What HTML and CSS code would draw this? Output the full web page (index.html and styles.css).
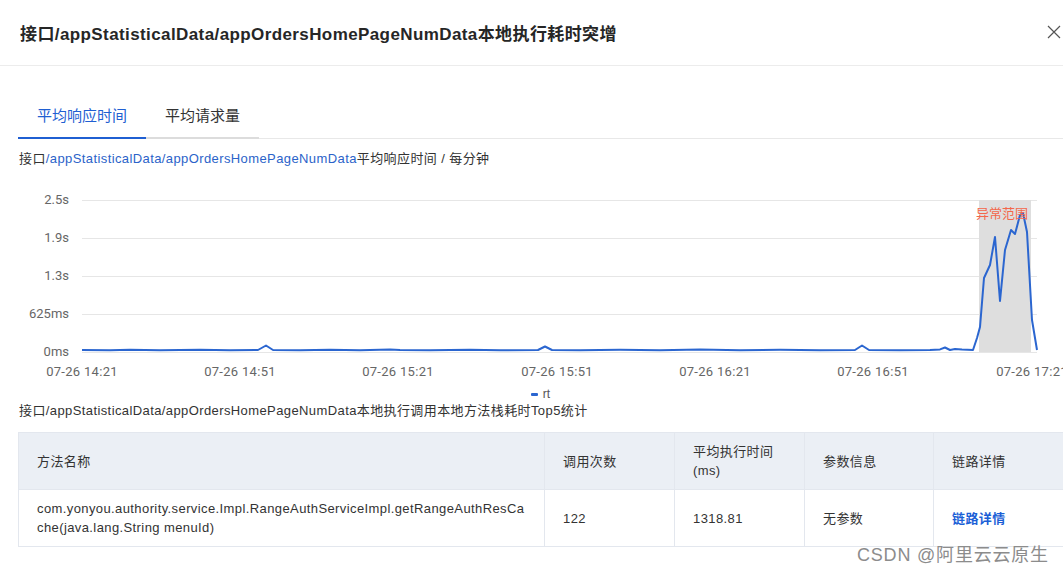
FILE: index.html
```html
<!DOCTYPE html>
<html lang="zh-CN">
<head>
<meta charset="utf-8">
<title>接口耗时突增</title>
<link rel="stylesheet" href="styles.css">
</head>
<body>
<div class="dialog">
  <header class="dlg-header">
    <h1 class="dlg-title">接口/appStatisticalData/appOrdersHomePageNumData本地执行耗时突增</h1>
    <svg class="close" width="14" height="14" viewBox="0 0 14 14"><path d="M1 1 L13 13 M13 1 L1 13" stroke="#555" stroke-width="1.2" fill="none"/></svg>
  </header>

  <nav class="tabs">
    <div class="tab active">平均响应时间</div>
    <div class="tab">平均请求量</div>
  </nav>

  <p class="subtitle">接口<span class="path">/appStatisticalData/appOrdersHomePageNumData</span>平均响应时间 / 每分钟</p>

  <svg class="chart" width="1063" height="192" viewBox="0 0 1063 192">
    <g class="grid" stroke="#e6e6e6" stroke-width="1">
      <line x1="82" y1="12.5" x2="1037" y2="12.5"/>
      <line x1="82" y1="50.5" x2="1037" y2="50.5"/>
      <line x1="82" y1="88.5" x2="1037" y2="88.5"/>
      <line x1="82" y1="126.5" x2="1037" y2="126.5"/>
      <line x1="82" y1="164.5" x2="1037" y2="164.5"/>
    </g>
    <rect x="979" y="12" width="52" height="152" fill="#dedede"/>
    <g class="ylab" text-anchor="end">
      <text x="69" y="16">2.5s</text>
      <text x="69" y="54">1.9s</text>
      <text x="69" y="92">1.3s</text>
      <text x="69" y="130">625ms</text>
      <text x="69" y="168">0ms</text>
    </g>
    <g class="xlab" text-anchor="middle">
      <text x="82" y="188">07-26 14:21</text>
      <text x="240" y="188">07-26 14:51</text>
      <text x="398" y="188">07-26 15:21</text>
      <text x="557" y="188">07-26 15:51</text>
      <text x="715" y="188">07-26 16:21</text>
      <text x="873" y="188">07-26 16:51</text>
      <text x="1032" y="188">07-26 17:21</text>
    </g>
    <polyline fill="none" stroke="#2b66d0" stroke-width="2" stroke-linejoin="round"
      points="82,162 110,162.3 130,161.7 160,162.2 200,161.8 230,162.2 258,162 266,157.5 273,162 300,162.2 330,161.8 360,162.2 390,161.5 400,162 430,162.2 470,161.8 500,162.2 538,162 545,158.5 552,162 580,162.2 620,161.8 660,162.2 700,161.6 740,162.2 780,161.8 820,162.2 855,162 862,157.5 869,162 900,162.2 930,162 940,161.4 945,159.5 950,162 955,161 962,161.6 973,162 977,150 980,139 984,90 990,77 995,49 1000,113 1005,62 1011,42 1015,46 1020,27 1023,25 1027,44 1032,132 1037,162"/>
    <text class="anomaly" x="1002" y="30" text-anchor="middle">异常范围</text>
  </svg>

  <div class="legend"><span class="legend-mark"></span><span>rt</span></div>

  <p class="subtitle section">接口/appStatisticalData/appOrdersHomePageNumData本地执行调用本地方法栈耗时Top5统计</p>

  <table class="tbl">
    <colgroup>
      <col class="c1"><col class="c2"><col class="c3"><col class="c4"><col class="c5">
    </colgroup>
    <thead>
      <tr>
        <th>方法名称</th>
        <th>调用次数</th>
        <th>平均执行时间 (ms)</th>
        <th>参数信息</th>
        <th>链路详情</th>
      </tr>
    </thead>
    <tbody>
      <tr>
        <td class="method">com.yonyou.authority.service.Impl.RangeAuthServiceImpl.getRangeAuthResCache(java.lang.String menuId)</td>
        <td>122</td>
        <td>1318.81</td>
        <td>无参数</td>
        <td><a class="link" href="#">链路详情</a></td>
      </tr>
    </tbody>
  </table>

  <div class="watermark">CSDN @阿里云云原生</div>
</div>
</body>
</html>
```

FILE: styles.css
```css
html, body {
  margin: 0;
  padding: 0;
  background: #ffffff;
}
body {
  width: 1063px;
  height: 575px;
  overflow: hidden;
  font-family: "Liberation Sans", "Noto Sans CJK SC", sans-serif;
  color: #333333;
  letter-spacing: 0.4px;
}
.dialog {
  position: relative;
  width: 1063px;
  height: 575px;
  overflow: hidden;
}
.dlg-header {
  height: 65px;
  display: flex;
  align-items: center;
  justify-content: space-between;
  padding: 0 2px 0 20px;
  border-bottom: 1px solid #ececec;
}
.dlg-title {
  margin: 0;
  font-size: 17px;
  font-weight: bold;
  color: #262626;
}
.close {
  display: block;
  margin-top: -1px;
}
.tabs {
  display: flex;
  margin: 28px 0 0 18px;
  border-bottom: 1px solid #e8e8e8;
  letter-spacing: 0;
}
.tab {
  height: 43px;
  line-height: 43px;
  padding: 0 19px;
  font-size: 15px;
  color: #333333;
  border-bottom: 2px solid #dcdcdc;
  margin-bottom: -1px;
}
.tab.active {
  color: #1f5fd2;
  border-bottom-color: #1f5fd2;
}
.subtitle {
  margin: 10px 0 0 19px;
  font-size: 13px;
  line-height: 20px;
  color: #333333;
}
.subtitle .path {
  color: #2b63c9;
}
.subtitle.section {
  margin-top: 0;
}
.chart {
  display: block;
  margin-top: 19px;
  letter-spacing: 0;
}
.ylab text, .xlab text {
  font-family: Roboto, "Liberation Sans", sans-serif;
  font-size: 13px;
  fill: #666666;
}
.xlab text {
  letter-spacing: 0.3px;
}
.anomaly {
  font-family: "Noto Sans CJK SC", sans-serif;
  font-size: 13px;
  fill: #f4664a;
}
.legend {
  display: flex;
  align-items: center;
  justify-content: center;
  gap: 5px;
  height: 14px;
  margin-top: 7px;
  padding-left: 18px;
  font-size: 12px;
  color: #555555;
  letter-spacing: 0;
}
.legend-mark {
  width: 7px;
  height: 3px;
  background: #2b66d0;
  border-radius: 1px;
}
.tbl {
  margin: 11px 0 0 18px;
  width: 1050px;
  border-collapse: collapse;
  table-layout: fixed;
  font-size: 13px;
  color: #333333;
}
.c1 { width: 526px; }
.c2 { width: 130px; }
.c3 { width: 130px; }
.c4 { width: 129px; }
.c5 { width: 135px; }
.tbl th, .tbl td {
  height: 57px;
  box-sizing: border-box;
  padding: 0 18px 0 18px;
  border: 1px solid #e3e7ee;
  text-align: left;
  line-height: 19px;
  vertical-align: middle;
}
.tbl th {
  background: #ebeff5;
  font-weight: normal;
}
.tbl td.method {
  word-break: break-all;
  padding-right: 16px;
}
.link {
  color: #1b5fd6;
  font-weight: bold;
  text-decoration: none;
}
.watermark {
  position: absolute;
  left: 857px;
  top: 543px;
  font-size: 18px;
  line-height: 24px;
  letter-spacing: 0.8px;
  color: #8c8c8c;
  text-shadow: 0 0 2px #ffffff;
}
```
